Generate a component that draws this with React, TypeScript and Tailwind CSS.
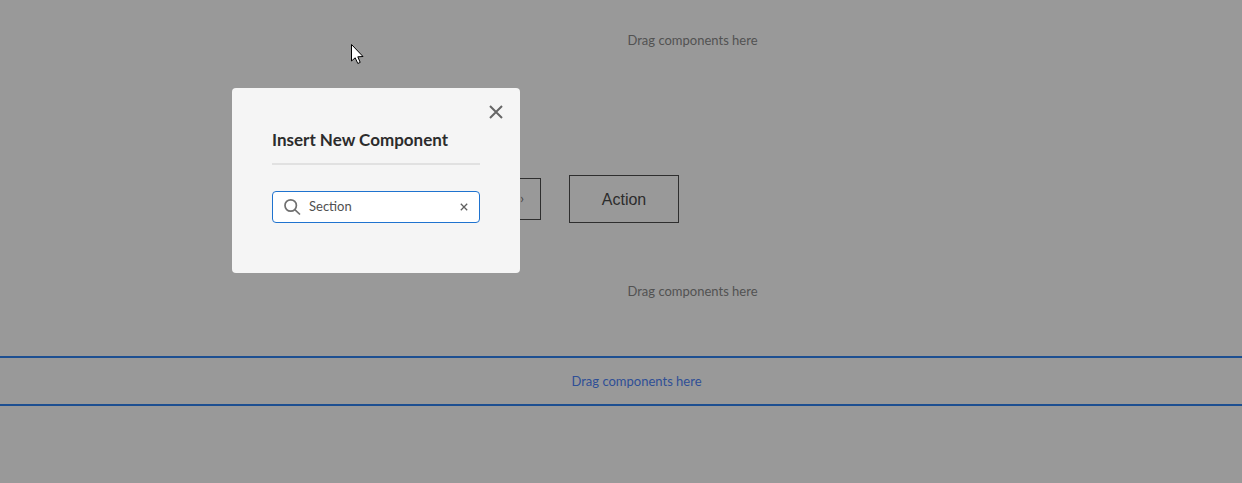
import React from "react";

const sans = "font-['Lato','Noto_Sans',sans-serif]";

function Cursor() {
  return (
    <svg className="absolute left-[350px] top-[43px]" width="15" height="22" viewBox="0 0 15 22">
      <path d="M1.5 1.5 V18 L5.2 14.8 L7.8 20.5 L10.2 19.4 L7.8 13.8 L13 13.5 Z" fill="#fff" stroke="#000" strokeWidth="1" />
    </svg>
  );
}

function Modal() {
  return (
    <div className="absolute left-[232px] top-[88px] w-[288px] h-[185px] bg-[#f5f5f5] rounded-[4px] px-10 pt-[40px]">
      <button className="absolute right-[16px] top-[16px] w-4 h-4 text-[#666666]">
        <svg width="16" height="16" viewBox="0 0 16 16" fill="none" stroke="currentColor" strokeWidth="2">
          <path d="M2 2 L14 14 M14 2 L2 14" />
        </svg>
      </button>
      <div className="text-[17px] leading-[24px] font-bold text-[#2c2c2c] h-[24px]">Insert New Component</div>
      <div className="h-[2px] bg-[#e1e1e1] mt-[11px]" />
      <div className="mt-[26px] h-[32px] bg-white border border-[#1f73cf] rounded-[4px] flex items-center pl-[11px] pr-[11px]">
        <svg width="18" height="18" viewBox="0 0 18 18" fill="none" stroke="#707070" strokeWidth="1.7" className="shrink-0">
          <circle cx="6.7" cy="7.5" r="5.7" />
          <path d="M10.8 11.6 L16 16.5" />
        </svg>
        <span className="ml-[7px] text-[13px] leading-[18px] pb-[3px] text-[#505050] flex-1">Section</span>
        <svg width="8" height="8" viewBox="0 0 8 8" fill="none" stroke="#606060" strokeWidth="1.3" className="shrink-0">
          <path d="M0.8 0.8 L7.2 7.2 M7.2 0.8 L0.8 7.2" />
        </svg>
      </div>
    </div>
  );
}

export default function App() {
  return (
    <div className={`relative w-[1242px] h-[483px] overflow-hidden bg-[#999999] ${sans}`}>
      <div className="h-[80px] pl-[143px] pt-[2px] flex items-center justify-center text-[13px] text-[#525252]">Drag components here</div>
      <div className="h-[143px] flex items-end pl-[400px]">
        <div className="w-[141px] h-[42px] mb-[3px] border border-[#2e2e2e] flex items-center justify-end pr-[16px] text-[#444] text-[13px]">›</div>
        <div className="ml-[28px] w-[110px] h-[48px] pt-[1px] border border-[#2e2e2e] flex items-center justify-center font-['Liberation_Sans',sans-serif] text-[16px] text-[#2c2c2c]">Action</div>
      </div>
      <div className="h-[133px] pl-[143px] pt-[5px] flex items-center justify-center text-[13px] text-[#525252]">Drag components here</div>
      <div className="h-[50px] border-y-2 border-[#1d4f91] pl-[31px] pt-[2px] flex items-center justify-center text-[13px] text-[#2f4f96]">Drag components here</div>
      <Modal />
      <Cursor />
    </div>
  );
}
